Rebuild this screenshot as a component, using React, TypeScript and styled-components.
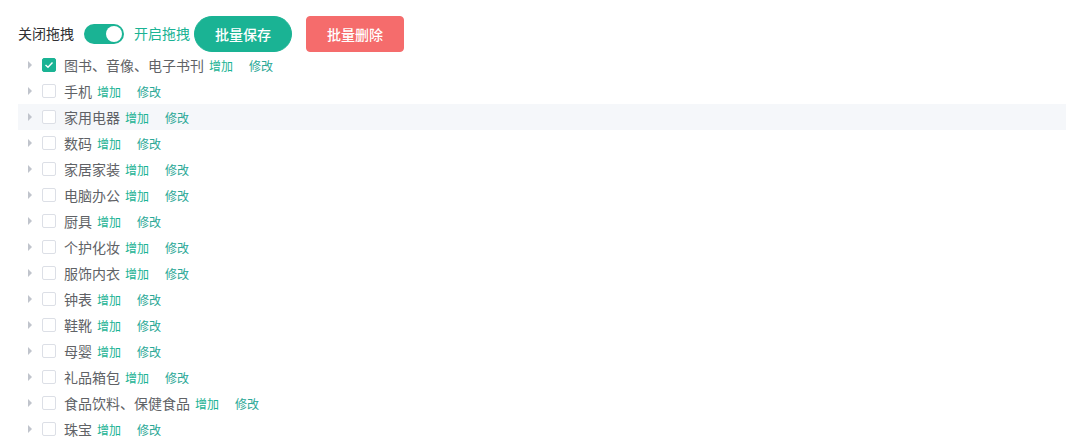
import { FC } from 'react'
import styled, { createGlobalStyle } from 'styled-components'

const teal = '#1ab394'

const GlobalStyle = createGlobalStyle`
  body {
    margin: 0;
    background: #fff;
    font-family: "Liberation Sans", "Noto Sans CJK SC", sans-serif;
  }
`

const Page = styled.div`
  padding: 16px 18px;
`

const Toolbar = styled.div`
  display: flex;
  align-items: center;
  height: 36px;
`

const SwitchLabel = styled.span<{ active?: boolean }>`
  font-size: 14px;
  color: ${({ active }) => active ? teal : '#303133'};
  line-height: 20px;
`

const Switch = styled.span<{ on?: boolean }>`
  position: relative;
  display: inline-block;
  width: 40px;
  height: 20px;
  margin: 0 10px;
  border-radius: 10px;
  background: ${({ on }) => on ? teal : '#dcdfe6'};

  &::after {
    content: '';
    position: absolute;
    top: 2px;
    left: ${({ on }) => on ? '22px' : '2px'};
    width: 16px;
    height: 16px;
    border-radius: 50%;
    background: #fff;
  }
`

const Button = styled.button<{ variant: 'save' | 'danger' }>`
  height: 36px;
  padding: 0 20px;
  margin-left: ${({ variant }) => variant === 'save' ? '4px' : '14px'};
  border: 1px solid ${({ variant }) => variant === 'save' ? teal : '#f56c6c'};
  border-radius: ${({ variant }) => variant === 'save' ? '18px' : '4px'};
  background: ${({ variant }) => variant === 'save' ? teal : '#f56c6c'};
  color: #fff;
  font-family: inherit;
  font-size: 14px;
  font-weight: 500;
  cursor: pointer;
`

const Tree = styled.div`
  display: flex;
  flex-direction: column;
`

const Row = styled.div<{ hover?: boolean }>`
  display: flex;
  align-items: center;
  height: 26px;
  background: ${({ hover }) => hover ? '#f5f7fa' : 'transparent'};
`

const Caret = styled.span`
  width: 24px;
  height: 26px;
  display: flex;
  align-items: center;
  justify-content: center;
  svg { display: block; }
`

const Check = styled.span<{ checked?: boolean }>`
  box-sizing: border-box;
  width: 14px;
  height: 14px;
  margin-right: 8px;
  border: 1px solid ${({ checked }) => checked ? teal : '#dcdfe6'};
  border-radius: 2px;
  background: ${({ checked }) => checked ? teal : '#fff'};
  display: flex;
  align-items: center;
  justify-content: center;
`

const Label = styled.span`
  font-size: 14px;
  color: #606266;
  white-space: nowrap;
`

const Action = styled.span<{ muted?: boolean }>`
  font-size: 12px;
  color: ${({ muted }) => muted ? '#2aa896' : teal};
  margin-left: ${({ muted }) => muted ? '16px' : '5px'};
  cursor: pointer;
`

const items = [
  '图书、音像、电子书刊', '手机', '家用电器', '数码', '家居家装', '电脑办公', '厨具',
  '个护化妆', '服饰内衣', '钟表', '鞋靴', '母婴', '礼品箱包', '食品饮料、保健食品', '珠宝',
]

const Node: FC<{ label: string, checked?: boolean, hover?: boolean }> = ({ label, checked, hover }) => (
  <Row hover={hover}>
    <Caret>
      <svg width="6" height="8" viewBox="0 0 6 8"><path d="M1 0 L5 4 L1 8 Z" fill="#c0c4cc" /></svg>
    </Caret>
    <Check checked={checked}>
      {checked && <svg width="10" height="8" viewBox="0 0 10 8"><path d="M1.5 4 L4 6.3 L8.5 1.5" stroke="#fff" strokeWidth="1.4" fill="none" /></svg>}
    </Check>
    <Label>{label}</Label>
    <Action>增加</Action>
    <Action muted>修改</Action>
  </Row>
)

export default function App() {
  return <Page>
    <GlobalStyle />
    <Toolbar>
      <SwitchLabel>关闭拖拽</SwitchLabel>
      <Switch on />
      <SwitchLabel active>开启拖拽</SwitchLabel>
      <Button variant="save">批量保存</Button>
      <Button variant="danger">批量删除</Button>
    </Toolbar>
    <Tree>
      {items.map((label, i) => <Node key={label} label={label} checked={i === 0} hover={i === 2} />)}
    </Tree>
  </Page>
}
